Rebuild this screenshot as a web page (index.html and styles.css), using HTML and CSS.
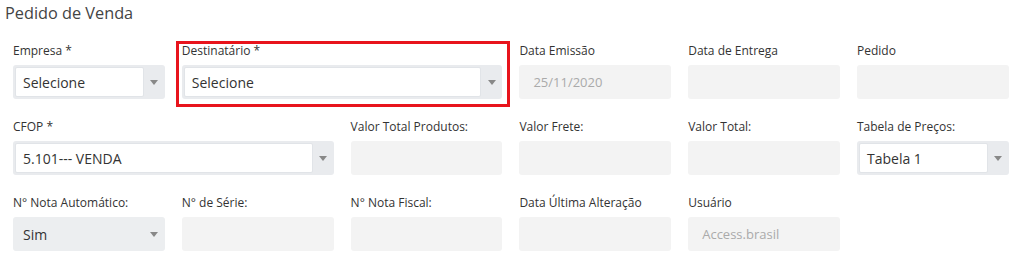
FILE: index.html
```html
<!DOCTYPE html>
<html lang="pt">
<head>
    <meta charset="utf-8">
    <title>Pedido de Venda</title>
    <link rel="stylesheet" href="styles.css">
</head>
<body>
    <h1 class="titulo">Pedido de Venda</h1>
    <div class="form">
        <div class="campo">
            <label>Empresa *</label>
            <div class="select"><span class="valor">Selecione</span><span class="seta"></span></div>
        </div>
        <div class="campo largo destaque">
            <label>Destinatário *</label>
            <div class="select"><span class="valor">Selecione</span><span class="seta"></span></div>
        </div>
        <div class="campo">
            <label>Data Emissão</label>
            <div class="input">25/11/2020</div>
        </div>
        <div class="campo">
            <label>Data de Entrega</label>
            <div class="input"></div>
        </div>
        <div class="campo">
            <label>Pedido</label>
            <div class="input"></div>
        </div>

        <div class="campo largo">
            <label>CFOP *</label>
            <div class="select"><span class="valor">5.101--- VENDA</span><span class="seta"></span></div>
        </div>
        <div class="campo">
            <label>Valor Total Produtos:</label>
            <div class="input"></div>
        </div>
        <div class="campo">
            <label>Valor Frete:</label>
            <div class="input"></div>
        </div>
        <div class="campo">
            <label>Valor Total:</label>
            <div class="input"></div>
        </div>
        <div class="campo">
            <label>Tabela de Preços:</label>
            <div class="select"><span class="valor">Tabela 1</span><span class="seta"></span></div>
        </div>

        <div class="campo">
            <label>N° Nota Automático:</label>
            <div class="select disabilitato"><span class="valor">Sim</span><span class="seta"></span></div>
        </div>
        <div class="campo">
            <label>N° de Série:</label>
            <div class="input"></div>
        </div>
        <div class="campo">
            <label>N° Nota Fiscal:</label>
            <div class="input"></div>
        </div>
        <div class="campo">
            <label>Data Última Alteração</label>
            <div class="input"></div>
        </div>
        <div class="campo">
            <label>Usuário</label>
            <div class="input">Access.brasil</div>
        </div>
    </div>
</body>
</html>
```

FILE: styles.css
```css
body {
    margin: 0;
    font-family: "Open Sans", Arial, sans-serif;
    color: #333;
    background: #fff;
}
.titulo {
    margin: 0;
    padding: 2px 0 0 5px;
    font-size: 16.3px;
    font-weight: normal;
    line-height: 22px;
    color: #444;
}
.form {
    display: grid;
    grid-template-columns: repeat(6, 151.8px);
    column-gap: 17px;
    row-gap: 19px;
    padding: 18px 0 0 13px;
}
.campo {
    position: relative;
}
.largo {
    grid-column: span 2;
}
label {
    display: block;
    font-size: 12px;
    line-height: 17px;
    margin-bottom: 6px;
    color: #333;
}
.destaque::before {
    content: "";
    position: absolute;
    top: -1px;
    left: -6px;
    right: -8px;
    bottom: -8px;
    border: 3px solid #e8141c;
}
.input {
    height: 34px;
    background: #f3f3f3;
    border-radius: 3px;
    box-sizing: border-box;
    padding-left: 14px;
    font-size: 13px;
    line-height: 35px;
    color: #aaa;
}
.select {
    display: flex;
    height: 34px;
    box-sizing: border-box;
    background: #e9ebee;
    border-radius: 3px;
    padding: 2px 0 2px 2px;
}
.valor {
    flex: 1;
    background: #fff;
    border: 1px solid #e1e4e8;
    border-radius: 2px;
    padding-left: 7px;
    font-size: 14px;
    line-height: 29px;
    color: #333;
}
.seta {
    width: 21px;
    display: flex;
    align-items: center;
    justify-content: center;
}
.seta::after {
    content: "";
    border-left: 4px solid transparent;
    border-right: 4px solid transparent;
    border-top: 5px solid #888;
}
.disabilitato {
    background: #eceef0;
}
.disabilitato .valor {
    background: transparent;
    border-color: transparent;
}
```
